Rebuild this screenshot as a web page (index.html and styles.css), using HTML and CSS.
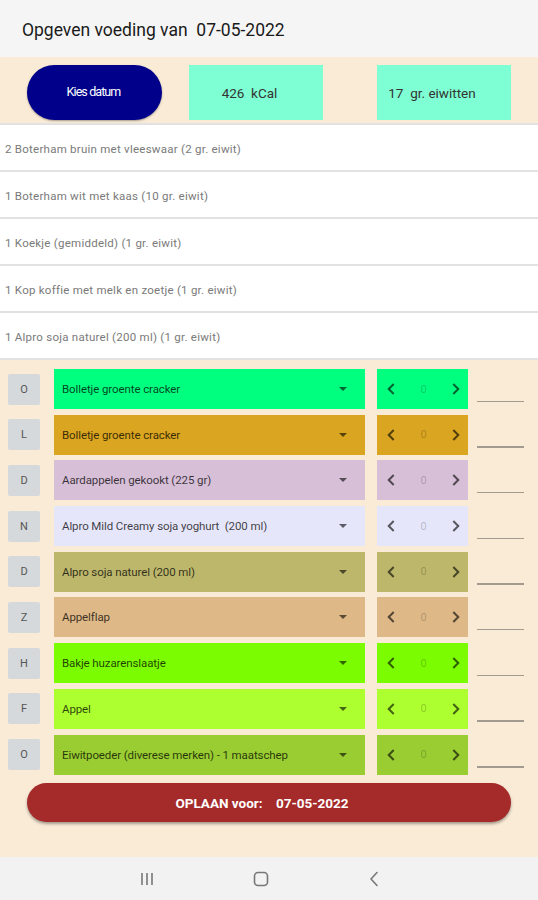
FILE: index.html
```html
<!DOCTYPE html>
<html lang="nl">
<head>
<meta charset="utf-8">
<title>Opgeven voeding</title>
<link rel="stylesheet" href="styles.css">
</head>
<body>
<div class="screen">
  <header class="title">Opgeven voeding van&nbsp; 07-05-2022</header>

  <section class="summary">
    <button class="pick-date">Kies datum</button>
    <div class="stat stat-kcal">426&nbsp; kCal</div>
    <div class="stat stat-wide">17&nbsp; gr. eiwitten</div>
  </section>

  <ul class="log">
    <li>2 Boterham bruin met vleeswaar (2 gr. eiwit)</li>
    <li>1 Boterham wit met kaas (10 gr. eiwit)</li>
    <li>1 Koekje (gemiddeld) (1 gr. eiwit)</li>
    <li>1 Kop koffie met melk en zoetje (1 gr. eiwit)</li>
    <li>1 Alpro soja naturel (200 ml) (1 gr. eiwit)</li>
  </ul>

  <main class="entries">
    <div class="entry c-spring"><span class="tag">O</span><div class="select"><span>Bolletje groente cracker</span><i class="caret"></i></div><div class="stepper"><span class="chev left"></span><span class="num">0</span><span class="chev right"></span></div><span class="line"></span></div>
    <div class="entry c-gold"><span class="tag">L</span><div class="select"><span>Bolletje groente cracker</span><i class="caret"></i></div><div class="stepper"><span class="chev left"></span><span class="num">0</span><span class="chev right"></span></div><span class="line"></span></div>
    <div class="entry c-thistle"><span class="tag">D</span><div class="select"><span>Aardappelen gekookt (225 gr)</span><i class="caret"></i></div><div class="stepper"><span class="chev left"></span><span class="num">0</span><span class="chev right"></span></div><span class="line"></span></div>
    <div class="entry c-lavender"><span class="tag">N</span><div class="select"><span>Alpro Mild Creamy soja yoghurt&nbsp; (200 ml)</span><i class="caret"></i></div><div class="stepper"><span class="chev left"></span><span class="num">0</span><span class="chev right"></span></div><span class="line"></span></div>
    <div class="entry c-khaki"><span class="tag">D</span><div class="select"><span>Alpro soja naturel (200 ml)</span><i class="caret"></i></div><div class="stepper"><span class="chev left"></span><span class="num">0</span><span class="chev right"></span></div><span class="line"></span></div>
    <div class="entry c-burly"><span class="tag">Z</span><div class="select"><span>Appelflap</span><i class="caret"></i></div><div class="stepper"><span class="chev left"></span><span class="num">0</span><span class="chev right"></span></div><span class="line"></span></div>
    <div class="entry c-lawn"><span class="tag">H</span><div class="select"><span>Bakje huzarenslaatje</span><i class="caret"></i></div><div class="stepper"><span class="chev left"></span><span class="num">0</span><span class="chev right"></span></div><span class="line"></span></div>
    <div class="entry c-greenyellow"><span class="tag">F</span><div class="select"><span>Appel</span><i class="caret"></i></div><div class="stepper"><span class="chev left"></span><span class="num">0</span><span class="chev right"></span></div><span class="line"></span></div>
    <div class="entry c-yellowgreen"><span class="tag">O</span><div class="select"><span>Eiwitpoeder (diverese merken) - 1 maatschep</span><i class="caret"></i></div><div class="stepper"><span class="chev left"></span><span class="num">0</span><span class="chev right"></span></div><span class="line"></span></div>

    <button class="save">OPLAAN voor:&nbsp;&nbsp;&nbsp; 07-05-2022</button>
  </main>

  <nav class="sysnav">
    <svg width="14" height="14" viewBox="0 0 14 14"><path d="M2 1v12M7 1v12M12 1v12" stroke="#777" stroke-width="1.6" fill="none"/></svg>
    <svg width="16" height="16" viewBox="0 0 16 16"><rect x="1.5" y="1.5" width="13" height="13" rx="3.5" stroke="#777" stroke-width="1.6" fill="none"/></svg>
    <svg width="12" height="16" viewBox="0 0 12 16"><path d="M9 1.5L3 8l6 6.5" stroke="#777" stroke-width="1.6" fill="none" stroke-linecap="round" stroke-linejoin="round"/></svg>
  </nav>
</div>
</body>
</html>
```

FILE: styles.css
```css
* { box-sizing: border-box; }
html, body { margin: 0; padding: 0; }
body {
  width: 538px;
  height: 900px;
  font-family: Roboto, "Noto Sans", "Liberation Sans", sans-serif;
  background: #faebd7;
}
.screen {
  width: 538px;
  height: 900px;
  display: flex;
  flex-direction: column;
}
.title {
  height: 57px;
  background: #f5f5f5;
  padding-left: 22px;
  display: flex;
  align-items: center;
  font-size: 17.5px;
  color: #1a1a1a;
  padding-top: 2px;
}
.summary {
  height: 66px;
  background: #faebd7;
  display: flex;
  align-items: flex-start;
  padding: 8px 0 0 27px;
}
.pick-date {
  width: 135px;
  height: 55px;
  border: none;
  border-radius: 28px;
  background: #00008b;
  color: #fff;
  font-family: Roboto, sans-serif;
  font-size: 12.5px;
  letter-spacing: -0.9px;
  padding: 0 2px 2px 0;
  box-shadow: 0 1px 2px rgba(0,0,0,0.35);
}
.stat {
  width: 134px;
  height: 55px;
  margin-left: 27px;
  background: #7fffd4;
  display: flex;
  align-items: center;
  justify-content: center;
  font-size: 13.5px;
  color: #333;
}
.stat-kcal { padding-right: 13px; }
.stat-wide { margin-left: 54px; padding-right: 24px; }
.log {
  list-style: none;
  margin: 0;
  padding: 0;
  border-top: 2px solid #e2e2e2;
}
.log li {
  height: 47px;
  background: #fff;
  border-bottom: 2px solid #e2e2e2;
  padding: 3px 0 0 5px;
  display: flex;
  align-items: center;
  font-size: 11.5px;
  color: #7a7a7a;
  letter-spacing: 0.25px;
}
.entries {
  flex: 1;
  display: flex;
  flex-direction: column;
  gap: 5.7px;
  padding-top: 9px;
}
.entry {
  height: 40px;
  display: flex;
  align-items: center;
}
.tag {
  width: 32px;
  height: 31px;
  margin-left: 8px;
  background: #d6d9db;
  border-radius: 2px;
  display: flex;
  align-items: center;
  justify-content: center;
  font-size: 11px;
  color: #555;
}
.select {
  width: 311px;
  height: 40px;
  margin-left: 14px;
  display: flex;
  align-items: center;
  justify-content: space-between;
  padding: 0 18px 0 8px;
  font-size: 11.5px;
  color: rgba(0,0,0,0.75);
  letter-spacing: -0.1px;
}
.caret {
  width: 0;
  height: 0;
  border-left: 4px solid transparent;
  border-right: 4px solid transparent;
  border-top: 4px solid rgba(0,0,0,0.6);
}
.stepper {
  width: 91px;
  height: 40px;
  margin-left: 12px;
  display: flex;
  align-items: center;
  justify-content: space-between;
  padding: 0 10px 0 12px;
}
.num {
  font-size: 11px;
  color: rgba(0,0,0,0.22);
}
.chev {
  width: 8px;
  height: 8px;
  border-left: 2px solid rgba(0,0,0,0.62);
  border-bottom: 2px solid rgba(0,0,0,0.62);
}
.chev.left { transform: rotate(45deg); }
.chev.right { transform: rotate(-135deg); }
.line {
  width: 47px;
  height: 1.5px;
  margin-left: 9px;
  align-self: flex-end;
  margin-bottom: 7px;
  background: #a39a90;
}
.c-spring > .select, .c-spring > .stepper { background: #00ff7f; }
.c-gold > .select, .c-gold > .stepper { background: #daa520; }
.c-thistle > .select, .c-thistle > .stepper { background: #d8bfd8; }
.c-lavender > .select, .c-lavender > .stepper { background: #e6e6fa; }
.c-khaki > .select, .c-khaki > .stepper { background: #bdb76b; }
.c-burly > .select, .c-burly > .stepper { background: #deb887; }
.c-lawn > .select, .c-lawn > .stepper { background: #7cfc00; }
.c-greenyellow > .select, .c-greenyellow > .stepper { background: #adff2f; }
.c-yellowgreen > .select, .c-yellowgreen > .stepper { background: #9acd32; }
.save {
  width: 484px;
  height: 39px;
  margin: 3px 0 0 27px;
  border: none;
  border-radius: 20px;
  background: #a52a2a;
  color: #fff;
  font-family: Roboto, sans-serif;
  font-weight: bold;
  font-size: 13.5px;
  box-shadow: 0 2px 3px rgba(0,0,0,0.35);
  padding: 0 14px 0 0;
}
.sysnav {
  height: 43px;
  background: #f2f2f2;
  display: flex;
  align-items: center;
  padding-left: 140px;
  gap: 99px;
}
```
